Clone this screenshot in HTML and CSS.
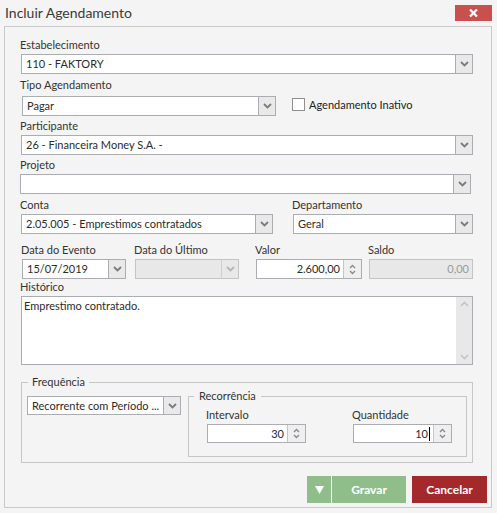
FILE: index.html
```html
<!DOCTYPE html>
<html lang="pt-BR">
<head>
  <meta charset="UTF-8">
  <title>Incluir Agendamento</title>
  <link rel="stylesheet" href="styles.css">
</head>
<body>
  <div class="titlebar">
    <div class="title">Incluir Agendamento</div>
    <button class="close-btn">
      <svg width="9" height="8" viewBox="0 0 9 8"><path d="M1 0.5l7 7M8 0.5l-7 7" stroke="#fff" stroke-width="2.2"/></svg>
    </button>
  </div>

  <div class="panel">
    <div class="form">
      <div class="field gap-3">
        <div class="label">Estabelecimento</div>
        <div class="combo">
          <span class="val">110 - FAKTORY</span>
          <span class="drop"><svg width="9" height="6" viewBox="0 0 9 6"><path d="M1 1l3.5 3.5L8 1" fill="none" stroke="#7b7b7b" stroke-width="1.8"/></svg></span>
        </div>
      </div>

      <div class="field gap-2">
        <div class="label label-tall">Tipo Agendamento</div>
        <div class="row">
          <div class="combo w-tipo">
            <span class="val">Pagar</span>
            <span class="drop"><svg width="9" height="6" viewBox="0 0 9 6"><path d="M1 1l3.5 3.5L8 1" fill="none" stroke="#7b7b7b" stroke-width="1.8"/></svg></span>
          </div>
          <label class="check"><span class="box"></span>Agendamento Inativo</label>
        </div>
      </div>

      <div class="field gap-2">
        <div class="label">Participante</div>
        <div class="combo">
          <span class="val">26 - Financeira Money S.A. -</span>
          <span class="drop"><svg width="9" height="6" viewBox="0 0 9 6"><path d="M1 1l3.5 3.5L8 1" fill="none" stroke="#7b7b7b" stroke-width="1.8"/></svg></span>
        </div>
      </div>

      <div class="field gap-3">
        <div class="label">Projeto</div>
        <div class="combo w-projeto">
          <span class="val"></span>
          <span class="drop"><svg width="9" height="6" viewBox="0 0 9 6"><path d="M1 1l3.5 3.5L8 1" fill="none" stroke="#7b7b7b" stroke-width="1.8"/></svg></span>
        </div>
      </div>

      <div class="row gap-8">
        <div class="field w-conta">
          <div class="label">Conta</div>
          <div class="combo">
            <span class="val">2.05.005 - Emprestimos contratados</span>
            <span class="drop"><svg width="9" height="6" viewBox="0 0 9 6"><path d="M1 1l3.5 3.5L8 1" fill="none" stroke="#7b7b7b" stroke-width="1.8"/></svg></span>
          </div>
        </div>
        <div class="field w-depto">
          <div class="label">Departamento</div>
          <div class="combo">
            <span class="val">Geral</span>
            <span class="drop"><svg width="9" height="6" viewBox="0 0 9 6"><path d="M1 1l3.5 3.5L8 1" fill="none" stroke="#7b7b7b" stroke-width="1.8"/></svg></span>
          </div>
        </div>
      </div>

      <div class="row dates">
        <div class="field w-104 ml-1">
          <div class="label">Data do Evento</div>
          <div class="combo">
            <span class="val">15/07/2019</span>
            <span class="drop"><svg width="9" height="6" viewBox="0 0 9 6"><path d="M1 1l3.5 3.5L8 1" fill="none" stroke="#7b7b7b" stroke-width="1.8"/></svg></span>
          </div>
        </div>
        <div class="field w-104 ml-9">
          <div class="label">Data do Último</div>
          <div class="combo disabled">
            <span class="val"></span>
            <span class="drop"><svg width="9" height="6" viewBox="0 0 9 6"><path d="M1 1l3.5 3.5L8 1" fill="none" stroke="#b5b5b5" stroke-width="1.8"/></svg></span>
          </div>
        </div>
        <div class="field w-106 ml-17">
          <div class="label">Valor</div>
          <div class="spin-input">
            <span class="num">2.600,00</span>
            <span class="spin">
              <svg width="7" height="5" viewBox="0 0 7 5"><path d="M1 4l2.5-2.5L6 4" fill="none" stroke="#8a8a8a" stroke-width="1.4"/></svg>
              <svg width="7" height="5" viewBox="0 0 7 5"><path d="M1 1l2.5 2.5L6 1" fill="none" stroke="#8a8a8a" stroke-width="1.4"/></svg>
            </span>
          </div>
        </div>
        <div class="field w-104 ml-7">
          <div class="label">Saldo</div>
          <div class="text-input disabled"><span class="num">0,00</span></div>
        </div>
      </div>

      <div class="field">
        <div class="label">Histórico</div>
        <div class="memo">
          <div class="memo-text">Emprestimo contratado.</div>
          <div class="scrollbar">
            <svg width="9" height="6" viewBox="0 0 9 6"><path d="M1 5l3.5-3.5L8 5" fill="none" stroke="#c4c4c4" stroke-width="1.6"/></svg>
            <svg width="9" height="6" viewBox="0 0 9 6"><path d="M1 1l3.5 3.5L8 1" fill="none" stroke="#c4c4c4" stroke-width="1.6"/></svg>
          </div>
        </div>
      </div>

      <fieldset class="group freq">
        <legend>Frequência</legend>
        <div class="freq-body">
          <div class="combo w-freq">
            <span class="val">Recorrente com Período ...</span>
            <span class="drop"><svg width="9" height="6" viewBox="0 0 9 6"><path d="M1 1l3.5 3.5L8 1" fill="none" stroke="#7b7b7b" stroke-width="1.8"/></svg></span>
          </div>
          <fieldset class="group recor">
            <legend>Recorrência</legend>
            <div class="recor-body">
              <div class="field w-99">
                <div class="label">Intervalo</div>
                <div class="spin-input small">
                  <span class="num">30</span>
                  <span class="spin">
                    <svg width="7" height="5" viewBox="0 0 7 5"><path d="M1 4l2.5-2.5L6 4" fill="none" stroke="#8a8a8a" stroke-width="1.4"/></svg>
                    <svg width="7" height="5" viewBox="0 0 7 5"><path d="M1 1l2.5 2.5L6 1" fill="none" stroke="#8a8a8a" stroke-width="1.4"/></svg>
                  </span>
                </div>
              </div>
              <div class="field w-99">
                <div class="label">Quantidade</div>
                <div class="spin-input small">
                  <span class="num">10<span class="caret"></span></span>
                  <span class="spin">
                    <svg width="7" height="5" viewBox="0 0 7 5"><path d="M1 4l2.5-2.5L6 4" fill="none" stroke="#8a8a8a" stroke-width="1.4"/></svg>
                    <svg width="7" height="5" viewBox="0 0 7 5"><path d="M1 1l2.5 2.5L6 1" fill="none" stroke="#8a8a8a" stroke-width="1.4"/></svg>
                  </span>
                </div>
              </div>
            </div>
          </fieldset>
        </div>
      </fieldset>
    </div>

    <div class="actions">
      <div class="btn-split">
        <span class="btn-arrow"><svg width="9" height="8" viewBox="0 0 9 8"><path d="M0 0h9L4.5 8z" fill="#fff"/></svg></span>
        <span class="btn-main">Gravar</span>
      </div>
      <button class="btn-cancel">Cancelar</button>
    </div>
  </div>
</body>
</html>
```

FILE: styles.css
```css
body {
  margin: 0;
  background: #f4f4f4;
  font-family: Lato, "Noto Sans", sans-serif;
  font-size: 11px;
  color: #2b2b2b;
}
.titlebar {
  height: 26px;
  display: flex;
  justify-content: space-between;
  align-items: flex-start;
  padding: 0 5px 0 5px;
}
.title {
  font-size: 14px;
  color: #3a3a3a;
  line-height: 26px;
}
.close-btn {
  margin-top: 5px;
  width: 37px;
  height: 16px;
  border: none;
  padding: 0;
  background: #c8504f;
  display: flex;
  align-items: center;
  justify-content: center;
}
.panel {
  margin: 0 5px 0 4px;
  border: 1px solid #c9c9c9;
  padding: 10px 4px 4px 16px;
}
.form {
  width: 452px;
}
.field {
  display: flex;
  flex-direction: column;
}
.label {
  line-height: 15px;
  margin-bottom: 2px;
  color: #333;
  margin-left: -1px;
}
.label-tall {
  margin-bottom: 4px;
}
.gap-2 { margin-bottom: 2px; }
.gap-3 { margin-bottom: 3px; }
.gap-8 { margin-bottom: 8px; }
.row {
  display: flex;
  align-items: flex-start;
}

.combo {
  display: flex;
  height: 20px;
  box-sizing: border-box;
  border: 1px solid #abadb3;
  background: #fff;
}
.combo .val {
  flex: 1;
  padding-left: 4px;
  line-height: 18px;
  white-space: nowrap;
  overflow: hidden;
}
.combo .drop {
  width: 16px;
  border-left: 1px solid #abadb3;
  background: #e9e9e9;
  display: flex;
  align-items: center;
  justify-content: center;
}
.combo.disabled {
  background: #e8e8e8;
  border-color: #c4c4c4;
}
.combo.disabled .drop {
  border-left-color: #cfcfcf;
  background: #e8e8e8;
}

.w-tipo { width: 254px; margin-left: 1px; }
.w-projeto { width: 451px; margin-left: -1px; }
.w-conta { width: 252px; }
.w-depto { width: 180px; margin-left: 20px; }
.w-104 { width: 104px; }
.w-106 { width: 106px; }
.w-99 { width: 99px; }
.ml-1 { margin-left: 1px; }
.ml-7 { margin-left: 7px; }
.ml-9 { margin-left: 9px; }
.ml-17 { margin-left: 17px; }

.check {
  display: flex;
  align-items: center;
  margin-left: 16px;
  margin-top: 1px;
  line-height: 15px;
  color: #222;
}
.check .box {
  width: 11px;
  height: 11px;
  border: 1px solid #8f8f8f;
  background: #fff;
  margin-right: 4px;
}

.spin-input, .text-input {
  display: flex;
  height: 20px;
  box-sizing: border-box;
  border: 1px solid #abadb3;
  background: #fff;
}
.spin-input.small {
  height: 19px;
}
.num {
  flex: 1;
  text-align: right;
  padding-right: 3px;
  line-height: 18px;
}
.spin-input.small .num {
  line-height: 17px;
}
.spin {
  width: 17px;
  border-left: 1px solid #c6c6c6;
  background: #efefef;
  display: flex;
  flex-direction: column;
  align-items: center;
  justify-content: center;
  gap: 1px;
}
.text-input.disabled {
  background: #e8e8e8;
  border-color: #c4c4c4;
  color: #9a9a9a;
}
.caret {
  display: inline-block;
  width: 1px;
  height: 14px;
  background: #000;
  vertical-align: -3px;
  margin-left: 1px;
}

.memo {
  display: flex;
  height: 69px;
  box-sizing: border-box;
  border: 1px solid #abadb3;
  background: #fff;
}
.memo-text {
  flex: 1;
  padding: 1px 2px;
  line-height: 15px;
}
.scrollbar {
  width: 16px;
  background: #e8e8e8;
  display: flex;
  flex-direction: column;
  align-items: center;
  justify-content: space-between;
  padding: 4px 0 4px;
}

.group {
  margin: 0;
  padding: 0;
  border: 1px solid #c6c6c6;
  min-width: 0;
}
.group legend {
  padding: 0 4px;
  line-height: 14px;
  color: #333;
}
.freq {
  margin-top: 10px;
}
.freq legend {
  margin-left: 6px;
}
.freq-body {
  display: flex;
  align-items: flex-start;
  gap: 7px;
  padding: 0 5px 5px 5px;
}
.w-freq {
  width: 154px;
  height: 19px;
  margin-top: 7px;
  flex-shrink: 0;
}
.w-freq .val {
  line-height: 17px;
}
.recor {
  flex: 1;
}
.recor legend {
  margin-left: 5px;
  padding: 0 5px;
}
.recor-body {
  display: flex;
  gap: 47px;
  padding: 4px 14px 13px 18px;
}

.actions {
  display: flex;
  justify-content: flex-end;
  gap: 6px;
  margin-top: 13px;
}
.btn-split {
  display: flex;
  height: 27px;
  background: #8fbe8b;
  color: #fff;
  font-weight: bold;
  font-size: 12px;
}
.btn-arrow {
  width: 24px;
  border-right: 1px solid #fff;
  display: flex;
  align-items: center;
  justify-content: center;
}
.btn-main {
  width: 74px;
  display: flex;
  align-items: center;
  justify-content: center;
}
.btn-cancel {
  width: 75px;
  height: 27px;
  border: none;
  background: #a5292b;
  color: #fff;
  font-family: Lato, "Noto Sans", sans-serif;
  font-weight: bold;
  font-size: 12px;
  padding: 0;
}
```
